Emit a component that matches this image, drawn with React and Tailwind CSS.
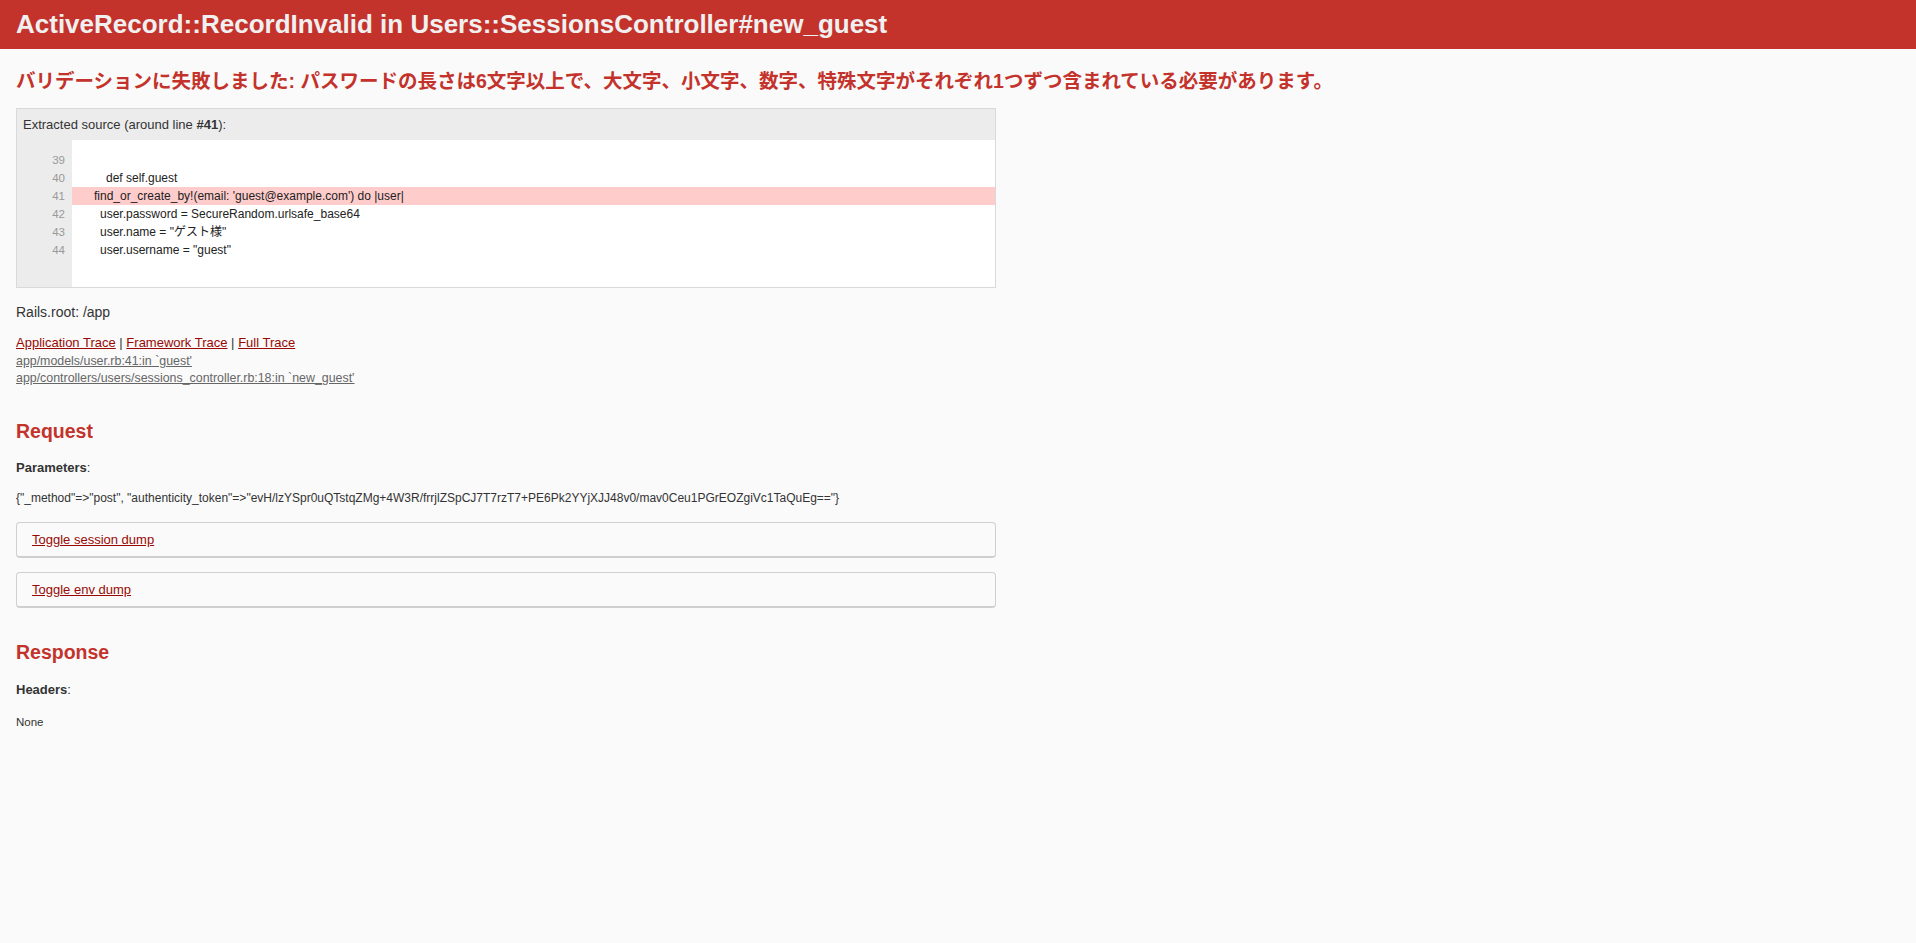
import React from 'react';

const sans = "font-['Liberation_Sans','Noto_Sans_CJK_JP',sans-serif]";

const sourceLines = [
  { no: 39, text: '', pad: 'pl-[28px]' },
  { no: 40, text: 'def self.guest', pad: 'pl-[34px]' },
  { no: 41, text: "find_or_create_by!(email: 'guest@example.com') do |user|", pad: 'pl-[22px]', active: true },
  { no: 42, text: 'user.password = SecureRandom.urlsafe_base64', pad: 'pl-[28px]' },
  { no: 43, text: 'user.name = "ゲスト様"', pad: 'pl-[28px]' },
  { no: 44, text: 'user.username = "guest"', pad: 'pl-[28px]' },
];

const params = '{"_method"=>"post", "authenticity_token"=>"evH/lzYSpr0uQTstqZMg+4W3R/frrjlZSpCJ7T7rzT7+PE6Pk2YYjXJJ48v0/mav0Ceu1PGrEOZgiVc1TaQuEg=="}';

const Toggle = ({ label }) => (
  <div className="max-w-[980px] border border-[#D0D0D0] border-b-2 border-b-[#cfcfcf] rounded-[4px] h-[36px] flex items-center px-[15px]">
    <a href="#" className="text-[13px] leading-[18px] text-[#980905] underline">{label}</a>
  </div>
);

const App = () => {
  return (
    <div className={`min-h-[943px] bg-[#FAFAFA] text-[#333] ${sans}`}>
      <header className="h-[49px] bg-[#C3332C] flex items-center px-4">
        <h1 className="text-[26px] leading-[29px] font-bold text-[#F0F0F0]">
          ActiveRecord::RecordInvalid in Users::SessionsController#new_guest
        </h1>
      </header>

      <div className="px-4">
        <div className="pt-[20px] text-[19.5px] leading-[25px] font-bold text-[#C3332C]">
          バリデーションに失敗しました: パスワードの長さは6文字以上で、大文字、小文字、数字、特殊文字がそれぞれ1つずつ含まれている必要があります。
        </div>

        {/* extracted source */}
        <div className="mt-[14px] max-w-[980px] border border-[#D9D9D9] bg-[#ECECEC]">
          <div className="h-[31px] flex items-center px-[6px] text-[13px]">
            Extracted source (around line&nbsp;<b>#41</b>):
          </div>
          <div className="flex h-[147px] bg-white">
            <div className="w-[55px] shrink-0 bg-[#ECECEC] pt-[11px] pr-[7px] text-right text-[11.5px] text-[#999]">
              {sourceLines.map(l => (
                <div key={l.no} className="h-[18px] leading-[18px]">{l.no}</div>
              ))}
            </div>
            <div className="flex-1 pt-[11px] text-[12px] text-[#222]">
              {sourceLines.map(l => (
                <div key={l.no} className={`h-[18px] leading-[18px] whitespace-pre ${l.pad} ${l.active ? 'bg-[#FFCCCC]' : ''}`}>
                  {l.text}
                </div>
              ))}
            </div>
          </div>
        </div>

        <p className="mt-[15px] text-[14px] leading-[18px]">Rails.root: /app</p>

        <div className="mt-[13px] text-[13px] leading-[18px]">
          <a href="#" className="text-[#980905] underline">Application Trace</a> |{' '}
          <a href="#" className="text-[#980905] underline">Framework Trace</a> |{' '}
          <a href="#" className="text-[#980905] underline">Full Trace</a>
        </div>
        <div className="mt-[1px] text-[12.4px] leading-[17px]">
          <div><a href="#" className="text-[#666] underline">app/models/user.rb:41:in `guest'</a></div>
          <div><a href="#" className="text-[#666] underline">app/controllers/users/sessions_controller.rb:18:in `new_guest'</a></div>
        </div>

        <h2 className="mt-[32px] text-[19.5px] leading-[25px] font-bold text-[#C3332C]">Request</h2>
        <p className="mt-[15px] text-[13px] leading-[18px]"><b>Parameters</b>:</p>
        <pre className={`mt-[14px] text-[12px] leading-[15px] ${sans} whitespace-pre-wrap`}>{params}</pre>

        <div className="mt-[16px] flex flex-col gap-[14px]">
          <Toggle label="Toggle session dump" />
          <Toggle label="Toggle env dump" />
        </div>

        <h2 className="mt-[32px] text-[19.5px] leading-[25px] font-bold text-[#C3332C]">Response</h2>
        <p className="mt-[16px] text-[13px] leading-[18px]"><b>Headers</b>:</p>
        <pre className={`mt-[16px] text-[11.5px] leading-[15px] ${sans}`}>None</pre>
      </div>
    </div>
  );
};

export default App;
